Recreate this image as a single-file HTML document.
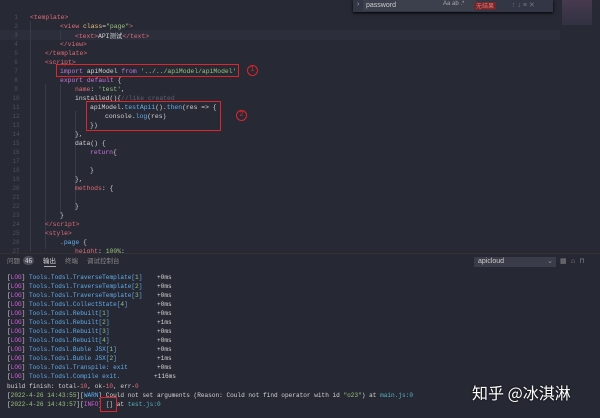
<!DOCTYPE html>
<html><head><meta charset="utf-8"><style>
body{margin:0;width:600px;height:417px;background:#272935;overflow:hidden;position:relative;font-family:"Liberation Mono",monospace;font-size:6.4px;color:#d4d4d4}
.l{position:absolute;white-space:pre;height:9px;line-height:9px}
.n{position:absolute;left:6px;width:20px;text-align:center;color:#4c5060;font-size:6px;line-height:9px}
.t{color:#e06c75}.s{color:#98c379}.k{color:#c678dd}.f{color:#61afef}.c{color:#5c6370}.y{color:#e5c07b}.g{color:#56b6c2}.m{color:#d55fde}
.box{position:absolute;border:1.5px solid #e0252a}
.vl{position:absolute;width:1px;background:#383b48}
#con .l{font-size:6.1px}
</style></head><body>
<div style="position:absolute;left:0;top:30px;width:560px;height:10px;background:#2c2f3b"></div>
<div class="vl" style="left:30px;top:21px;height:230px"></div>
<div class="vl" style="left:45px;top:84px;height:165px"></div>
<div class="vl" style="left:60px;top:30px;height:10px"></div>
<div class="vl" style="left:60px;top:84px;height:130px"></div>
<div class="vl" style="left:75px;top:111px;height:100px"></div>
<div id="code"></div>
<script>
var L=[
[30,'<span class="t">&lt;template&gt;</span>'],
[60,'<span class="t">&lt;view</span> <span class="y">class</span>=<span class="s">"page"</span><span class="t">&gt;</span>'],
[75,'<span class="t">&lt;text&gt;</span>API<span style="font-family:\'Noto Sans CJK SC\',sans-serif">测试</span><span class="t">&lt;/text&gt;</span>'],
[60,'<span class="t">&lt;/view&gt;</span>'],
[45,'<span class="t">&lt;/template&gt;</span>'],
[45,'<span class="t">&lt;script&gt;</span>'],
[60,'<span class="k">import</span> apiModel <span class="k">from</span> <span class="s">\'../../apiModel/apiModel\'</span>'],
[60,'<span class="k">export default</span> {'],
[75,'<span class="t">name</span>: <span class="s">\'test\'</span>,'],
[75,'installed(){<span class="c">//like created</span>'],
[90,'apiModel.<span class="f">testApi1</span>().<span class="f">then</span>(res =&gt; {'],
[105,'console.<span class="f">log</span>(res)'],
[90,'})'],
[75,'},'],
[75,'data() {'],
[90,'<span class="k">return</span>{'],
[90,''],
[90,'}'],
[75,'},'],
[75,'<span class="t">methods</span>: {'],
[75,''],
[75,'}'],
[60,'}'],
[45,'<span class="t">&lt;/script&gt;</span>'],
[45,'<span class="t">&lt;style&gt;</span>'],
[60,'<span class="f">.page</span> {'],
[75,'<span class="t">height</span>: <span class="s">100%</span>;']];
var h='';
L.forEach(function(a,i){var y=12.5+i*9;h+='<div class="n" style="top:'+y+'px">'+(i+1)+'</div><div class="l" style="left:'+a[0]+'px;top:'+y+'px">'+a[1]+'</div>';});
document.getElementById('code').innerHTML=h;
</script>
<div class="box" style="left:56px;top:64px;width:181px;height:11px"></div>
<div style="position:absolute;left:247px;top:65px;width:9px;height:9px;border:1px solid #e0252a;border-radius:50%;color:#e0252a;font-size:7px;line-height:9px;text-align:center">1</div>
<div class="box" style="left:86px;top:101px;width:133px;height:28px"></div>
<div style="position:absolute;left:236px;top:110px;width:9px;height:9px;border:1px solid #e0252a;border-radius:50%;color:#e0252a;font-size:7px;line-height:9px;text-align:center">2</div>
<!-- search widget -->
<div style="position:absolute;left:353px;top:0;width:200px;height:12px;background:#333644;box-shadow:0 1px 3px #000"></div>
<div style="position:absolute;left:356px;top:1px;color:#aaa;font-size:7px">›</div>
<div style="position:absolute;left:363px;top:0;width:110px;height:11px;background:#3c3f4c;color:#ccc;font-family:'Liberation Sans';font-size:7px;line-height:11px;padding-left:3px">password</div>
<div style="position:absolute;left:443px;top:1px;color:#aaa;font-family:'Liberation Sans';font-size:6px">Aa ab .*</div>
<div style="position:absolute;left:474px;top:2px;background:#6b2b2e;color:#f07070;font-family:'Noto Sans CJK SC';font-size:6px;line-height:8px;padding:0 2px">无结果</div>
<div style="position:absolute;left:512px;top:1px;color:#777;font-size:7px;font-family:'Liberation Sans'">↑ ↓ ≡ ✕</div>
<div style="position:absolute;left:562px;top:0;width:30px;height:25px;background:linear-gradient(#6a4a6a,#3a3a50);opacity:.5"></div>
<!-- panel -->
<div style="position:absolute;left:0;top:253px;width:600px;height:164px;background:#262833;border-top:1px solid #333"></div>
<div style="position:absolute;left:0;top:253px;width:600px;height:15px;font-family:'Noto Sans CJK SC',sans-serif;font-size:6.5px;color:#888;line-height:15px">
<span style="position:absolute;left:7px">问题</span><span style="position:absolute;left:23px;top:3px;width:11px;height:9px;line-height:9px;background:#4a4d5a;border-radius:5px;text-align:center;color:#ddd">46</span>
<span style="position:absolute;left:43px;color:#ddd">输出</span><span style="position:absolute;left:65px">终端</span><span style="position:absolute;left:87px">调试控制台</span></div>
<div style="position:absolute;left:44px;top:266px;width:12px;height:1px;background:#aaa"></div>
<div style="position:absolute;left:474px;top:257px;width:78px;height:10px;background:#3a3d49;color:#ccc;font-family:'Liberation Sans';font-size:7px;line-height:10px;padding-left:4px">apicloud<span style="position:absolute;right:3px;color:#999">⌄</span></div>
<div style="position:absolute;left:560px;top:257px;color:#888;font-size:7px">▦ ⌂ ⊓</div>
<div id="con"></div>
<script>
var C=[['TraverseTemplate[<span class="s">1</span>]','+0ms'],['TraverseTemplate[<span class="s">2</span>]','+0ms'],['TraverseTemplate[<span class="s">3</span>]','+0ms'],['CollectState[<span class="s">4</span>]','+0ms'],['Rebuilt[<span class="s">1</span>]','+0ms'],['Rebuilt[<span class="s">2</span>]','+1ms'],['Rebuilt[<span class="s">3</span>]','+0ms'],['Rebuilt[<span class="s">4</span>]','+0ms'],['Buble JSX[<span class="s">1</span>]','+0ms'],['Buble JSX[<span class="s">2</span>]','+1ms'],['Transpile: exit','+0ms'],['Compile exit.','+116ms']];
var h='';
C.forEach(function(c,i){var y=272.5+i*9.05;h+='<div class="l" style="left:7px;top:'+y+'px">[<span class="m">LOG</span>] <span class="f">Tools.Todsl.</span><span class="f">'+c[0]+'</span></div><div class="l" style="left:'+(c[1]=='+116ms'?154:157)+'px;top:'+y+'px">'+c[1]+'</div>';});
h+='<div class="l" style="left:7px;top:381.5px">build finish: total-<span class="t">10</span>, ok-<span class="t">10</span>, err-<span class="t">0</span></div>';
h+='<div class="l" style="left:7px;top:390.5px">[<span class="s">2022-4-26 14:43:55</span>][<span class="f">WARN</span>] Could not set arguments (Reason: Could not find operator with id <span class="s">"o23"</span>) at <span class="g">main.js:0</span></div>';
h+='<div class="l" style="left:7px;top:399.5px">[<span class="s">2022-4-26 14:43:57</span>][<span class="m">INFO</span>] [] at <span class="g">test.js:0</span></div>';
document.getElementById('con').innerHTML=h;
</script>
<div class="box" style="left:100px;top:397px;width:15px;height:13px"></div>
<div style="position:absolute;left:472px;top:380px;color:#fff;font-family:'Noto Sans CJK SC',sans-serif;font-size:16px;text-shadow:0 0 2px #000">知乎 @冰淇淋</div>
</body></html>
